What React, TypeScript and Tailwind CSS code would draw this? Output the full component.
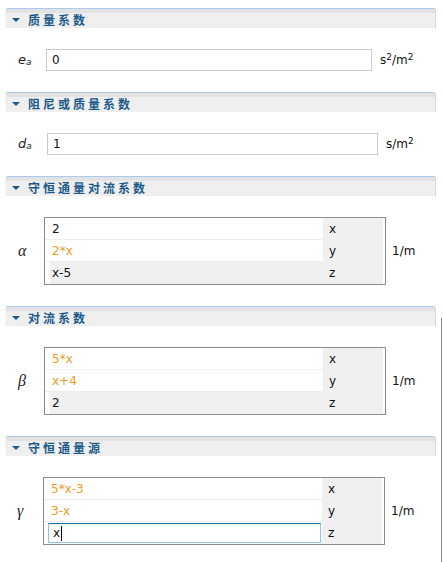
import type { ReactNode } from "react";

const FONT = { fontFamily: '"DejaVu Sans", Verdana, "Noto Sans CJK SC", sans-serif' };

type Row = { value: string; axis: string; orange?: boolean; shaded?: boolean; editing?: boolean };

const Header = ({ title }: { title: string }) => (
  <div className="ml-[5px] mr-[7px] h-5 rounded-t-[3px] border-t border-[#a6cbef] border-l border-l-[#f4f4f4] border-r border-r-[#d6d6d6] bg-[linear-gradient(#e3e3e3_0,#e3e3e3_4px,#efefef_4px)] flex items-center">
    <span className="ml-[6px] mr-[8px] mt-[2px] h-0 w-0 border-x-[4px] border-t-[4px] border-x-transparent border-t-[#1b5a8a]" />
    <span
      className="mt-[2px] text-[12px] font-bold tracking-[3px] text-[#1b5a8a]"
      style={{ fontFamily: '"Noto Sans CJK SC", "DejaVu Sans", sans-serif' }}
    >
      {title}
    </span>
  </div>
);

const Label = ({ children, greek }: { children: ReactNode; greek?: boolean }) => (
  <div
    className={greek ? "w-[26px] text-[16px] italic text-[#222]" : "w-[28px] text-[13px] italic text-[#222]"}
    style={{ fontFamily: greek ? '"Liberation Serif", "DejaVu Serif", serif' : '"DejaVu Sans", sans-serif' }}
  >
    {children}
  </div>
);

const Sub = ({ base }: { base: string }) => (
  <span>
    {base}
    <sub className="text-[9px] relative top-[1px]">a</sub>
  </span>
);

const InputRow = ({ label, value, width, unit }: { label: ReactNode; value: string; width: string; unit: ReactNode }) => (
  <div className="flex items-center pl-[18px] pt-[21px] pb-[21px]">
    <Label>{label}</Label>
    <div className={`${width} h-[22px] border border-[#cbcbcb] bg-white flex items-center pl-[5px] text-[12px] text-[#111]`}>
      {value}
    </div>
    <div className="ml-[8px] text-[12px] text-[#111]">{unit}</div>
  </div>
);

const Table = ({ label, rows, unit, offset }: { label: ReactNode; rows: Row[]; unit: string; offset: string }) => (
  <div className="flex items-center pt-[21px] pb-[21px]">
    <div className={offset}>
      <Label greek>{label}</Label>
    </div>
    <div className="w-[342px] border border-[#8c8c8c] bg-white flex flex-col">
      {rows.map((r, i) => (
        <div key={i} className="flex h-[22px]">
          <div className={`w-[278px] h-full flex items-center ${i < 2 ? "border-b border-[#ededed]" : ""}`}>
            {r.editing ? (
              <div className="ml-[4px] w-[273px] h-[20px] border border-[#8fc3f0] border-t-[#1f6ea6] bg-white flex items-center pl-[4px] text-[12px] text-[#111]">
                {r.value}
                <span className="ml-[1px] inline-block h-[15px] w-[1px] bg-black" />
              </div>
            ) : r.shaded ? (
              <div className="ml-[5px] w-[273px] h-full flex items-center pl-[2px] bg-[#f0f0f0] text-[12px] text-[#111]">
                {r.value}
              </div>
            ) : (
              <div
                className={`w-full h-full flex items-center pl-[7px] text-[12px] ${
                  r.orange ? "text-[#eb9c1f]" : "text-[#111]"
                }`}
              >
                {r.value}
              </div>
            )}
          </div>
          <div className="w-[60px] h-full bg-[#f0f0f0] flex items-center pl-[6px] text-[12px] text-[#111]">{r.axis}</div>
        </div>
      ))}
    </div>
    <div className="ml-[6px] text-[12px] text-[#111]">{unit}</div>
  </div>
);

export default function App() {
  return (
    <div className="relative w-[443px] h-[562px] overflow-hidden bg-white pt-[8px]" style={FONT}>
      <Header title="质量系数" />
      <InputRow
        label={<Sub base="e" />}
        value="0"
        width="w-[326px]"
        unit={
          <span>
            s<sup className="text-[9px]">2</sup>/m<sup className="text-[9px]">2</sup>
          </span>
        }
      />
      <Header title="阻尼或质量系数" />
      <InputRow
        label={<Sub base="d" />}
        value="1"
        width="w-[331px] ml-[1px]"
        unit={
          <span>
            s/m<sup className="text-[9px]">2</sup>
          </span>
        }
      />
      <Header title="守恒通量对流系数" />
      <Table
        label="α"
        offset="pl-[18px]"
        unit="1/m"
        rows={[
          { value: "2", axis: "x" },
          { value: "2*x", axis: "y", orange: true },
          { value: "x-5", axis: "z", shaded: true },
        ]}
      />
      <Header title="对流系数" />
      <Table
        label="β"
        offset="pl-[18px]"
        unit="1/m"
        rows={[
          { value: "5*x", axis: "x", orange: true },
          { value: "x+4", axis: "y", orange: true },
          { value: "2", axis: "z", shaded: true },
        ]}
      />
      <Header title="守恒通量源" />
      <Table
        label="γ"
        offset="pl-[17px]"
        unit="1/m"
        rows={[
          { value: "5*x-3", axis: "x", orange: true },
          { value: "3-x", axis: "y", orange: true },
          { value: "x", axis: "z", editing: true },
        ]}
      />
      <div className="absolute right-[1px] top-[318px] bottom-0 w-[1px] bg-[#8a8a8a]" />
    </div>
  );
}
